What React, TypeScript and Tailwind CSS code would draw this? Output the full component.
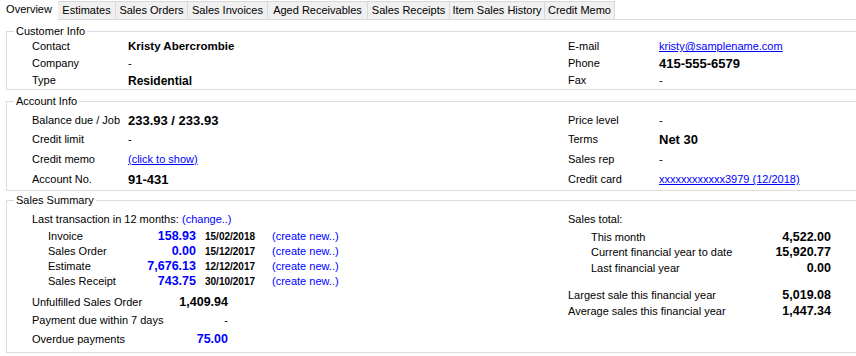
import React from 'react';

const tabs = [
  { name: 'Estimates', w: 'w-[58px]' },
  { name: 'Sales Orders', w: 'w-[72px]' },
  { name: 'Sales Invoices', w: 'w-[80px]' },
  { name: 'Aged Receivables', w: 'w-[100px]' },
  { name: 'Sales Receipts', w: 'w-[82px]' },
  { name: 'Item Sales History', w: 'w-[95px]' },
  { name: 'Credit Memo', w: 'w-[70px]' },
];

const GroupBox = ({ title, className, children }: { title: string; className?: string; children: React.ReactNode }) => (
  <div className={`relative ml-[6px] w-[860px] border border-[#dcdcdc] ${className ?? ''}`}>
    <div className="absolute -top-[7px] left-[7px] bg-white px-[2px] leading-[13px] text-[#000]">{title}</div>
    {children}
  </div>
);

const Row = ({ label, h, children, labelW = 'w-[96px]' }: { label: string; h: string; children?: React.ReactNode; labelW?: string }) => (
  <div className={`flex items-center whitespace-nowrap ${h}`}>
    <div className={`${labelW} shrink-0`}>{label}</div>
    <div>{children}</div>
  </div>
);

const txRows = [
  { label: 'Invoice', amount: '158.93', date: '15/02/2018' },
  { label: 'Sales Order', amount: '0.00', date: '15/12/2017' },
  { label: 'Estimate', amount: '7,676.13', date: '12/12/2017' },
  { label: 'Sales Receipt', amount: '743.75', date: '30/10/2017' },
];

export default function App() {
  return (
    <div
      className="w-[856px] h-[356px] overflow-hidden bg-white text-[11px] text-black"
      style={{ fontFamily: '"Liberation Sans", Arial, sans-serif' }}
    >
      {/* tab strip */}
      <div className="flex h-[20px] items-end border-b border-[#d9d9d9]">
        <div className="relative -mb-px flex h-[21px] w-[58px] items-center justify-center bg-white">Overview</div>
        {tabs.map((t) => (
          <div
            key={t.name}
            className={`flex h-[18px] ${t.w} items-center justify-center border border-l-0 border-b-0 border-[#d9d9d9] bg-[#f0f0f0] first:border-l`}
          >
            {t.name}
          </div>
        ))}
      </div>

      <GroupBox title="Customer Info" className="mt-[11px] pt-[6px]">
        <div className="flex">
          <div className="w-[561px] pl-[25px]">
            <Row label="Contact" h="h-[17px]"><span className="text-[11.5px] font-bold">Kristy Abercrombie</span></Row>
            <Row label="Company" h="h-[17px]">-</Row>
            <Row label="Type" h="h-[17px]"><span className="text-[12px] font-bold">Residential</span></Row>
          </div>
          <div>
            <Row label="E-mail" h="h-[17px]" labelW="w-[91px]">
              <span className="text-[#0000ff] underline">kristy@samplename.com</span>
            </Row>
            <Row label="Phone" h="h-[17px]" labelW="w-[91px]"><span className="text-[13px] font-bold">415-555-6579</span></Row>
            <Row label="Fax" h="h-[17px]" labelW="w-[91px]">-</Row>
          </div>
        </div>
      </GroupBox>

      <GroupBox title="Account Info" className="mt-[11px] h-[90px] pt-[9px]">
        <div className="flex">
          <div className="w-[561px] pl-[25px]">
            <Row label="Balance due / Job" h="h-[19px]"><span className="text-[13px] font-bold">233.93 / 233.93</span></Row>
            <Row label="Credit limit" h="h-[19px]">-</Row>
            <Row label="Credit memo" h="h-[20px]"><span className="text-[#0000ff] underline">(click to show)</span></Row>
            <Row label="Account No." h="h-[21px]"><span className="text-[13px] font-bold">91-431</span></Row>
          </div>
          <div>
            <Row label="Price level" h="h-[19px]" labelW="w-[91px]">-</Row>
            <Row label="Terms" h="h-[19px]" labelW="w-[91px]"><span className="text-[13px] font-bold">Net 30</span></Row>
            <Row label="Sales rep" h="h-[20px]" labelW="w-[91px]">-</Row>
            <Row label="Credit card" h="h-[21px]" labelW="w-[91px]">
              <span className="text-[#0000ff] underline">xxxxxxxxxxxx3979 (12/2018)</span>
            </Row>
          </div>
        </div>
      </GroupBox>

      <GroupBox title="Sales Summary" className="mt-[9px] h-[153px] pt-[10px]">
        <div className="flex whitespace-nowrap">
          <div className="w-[561px] pl-[25px]">
            <div className="flex h-[16px] items-center">
              <div className="w-[150px]">Last transaction in 12 months:</div>
              <span className="text-[#0000ff]">(change..)</span>
            </div>
            <div className="mt-[2px]">
              {txRows.map((r) => (
                <div key={r.label} className="flex h-[15px] items-center pl-[16px]">
                  <div className="w-[92px]">{r.label}</div>
                  <div className="w-[56px] text-right text-[12.5px] font-bold text-[#0000ff]">{r.amount}</div>
                  <div className="w-[76px] pl-[9px] text-[10px] font-bold">{r.date}</div>
                  <span className="text-[#0000ff]">(create new..)</span>
                </div>
              ))}
            </div>
            <div className="mt-[4px] flex h-[18px] w-[196px] items-center justify-between">
              <span>Unfulfilled Sales Order</span>
              <span className="text-[12.5px] font-bold">1,409.94</span>
            </div>
            <div className="flex h-[19px] w-[196px] items-center justify-between">
              <span>Payment due within 7 days</span>
              <span>-</span>
            </div>
            <div className="flex h-[18px] w-[196px] items-center justify-between">
              <span>Overdue payments</span>
              <span className="text-[12.5px] font-bold text-[#0000ff]">75.00</span>
            </div>
          </div>
          <div className="w-[263px]">
            <div className="flex h-[16px] items-center">Sales total:</div>
            <div className="mt-[2px] pl-[23px]">
              <div className="flex h-[16px] items-center justify-between">
                <span>This month</span>
                <span className="text-[12.5px] font-bold">4,522.00</span>
              </div>
              <div className="flex h-[15px] items-center justify-between">
                <span>Current financial year to date</span>
                <span className="text-[12.5px] font-bold">15,920.77</span>
              </div>
              <div className="flex h-[16px] items-center justify-between">
                <span>Last financial year</span>
                <span className="text-[12.5px] font-bold">0.00</span>
              </div>
            </div>
            <div className="mt-[11px] flex h-[16px] items-center justify-between">
              <span>Largest sale this financial year</span>
              <span className="text-[12.5px] font-bold">5,019.08</span>
            </div>
            <div className="flex h-[16px] items-center justify-between">
              <span>Average sales this financial year</span>
              <span className="text-[12.5px] font-bold">1,447.34</span>
            </div>
          </div>
        </div>
      </GroupBox>

      <GroupBox title="Custom Fields" className="mt-[9px] h-[40px]">
        <div />
      </GroupBox>
    </div>
  );
}
